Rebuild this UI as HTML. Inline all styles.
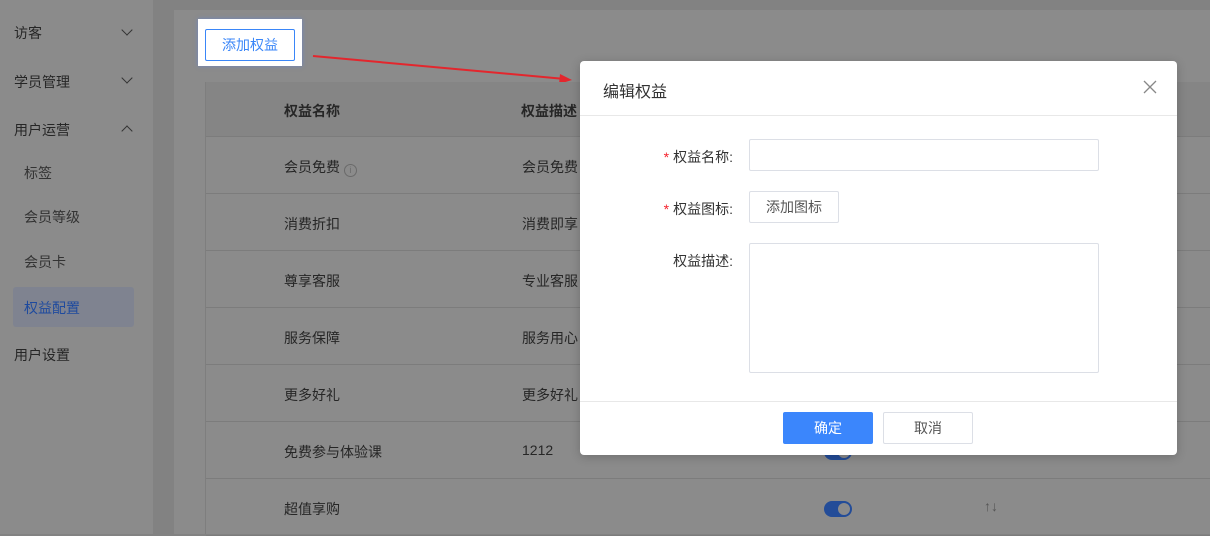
<!DOCTYPE html>
<html><head><meta charset="utf-8"><style>
*{box-sizing:border-box;margin:0;padding:0}
body{width:1210px;height:534px;overflow:hidden;background:#828282;font-family:"Liberation Sans","Noto Sans CJK SC",sans-serif;font-size:14px;color:#2a2a2a;position:relative}
.side{position:absolute;left:0;top:0;width:153px;height:534px;background:#8b8b8b}
.si{position:absolute;left:14px;font-size:14px;color:#262626}
.sub{left:24px;color:#333}
.chev{position:absolute;left:123px;width:8px;height:8px;border-right:1.3px solid #333;border-bottom:1.3px solid #333}
.panel{position:absolute;left:174px;top:10px;width:1036px;height:524px;background:#8b8b8b}
.tbl{position:absolute;left:205px;top:82px;width:1005px;height:452px;border-left:1px solid #7e7e7e}
.th{position:absolute;left:0;top:0;width:100%;height:55px;background:#858585;border-bottom:1px solid #7c7c7c}
.row{position:absolute;left:0;width:100%;height:57px;border-bottom:1px solid #7c7c7c}
.c{position:absolute;font-size:14px;color:#262626}
.sw{position:absolute;left:618px;top:21px;width:28px;height:16px;border-radius:8px;background:#234c98}
.sw div{position:absolute;right:2px;top:2px;width:12px;height:12px;border-radius:50%;background:#8b8b8b}
.dlg{position:absolute;left:580px;top:61px;width:597px;height:394px;background:#fff;border-radius:4px;box-shadow:0 2px 10px rgba(0,0,0,.2)}
.lbl{position:absolute;right:444px;font-size:14px;color:#333;text-align:right}
.req{color:#f5222d;margin-right:4px}
.inp{position:absolute;border:1px solid #dcdfe6;border-radius:2px;background:#fff}
</style></head><body>
<div class="side">
<div class="si" style="top:23px">访客</div><div class="chev" style="top:26px;transform:rotate(45deg)"></div>
<div class="si" style="top:72px">学员管理</div><div class="chev" style="top:74px;transform:rotate(45deg)"></div>
<div class="si" style="top:120px">用户运营</div><div class="chev" style="top:127px;transform:rotate(-135deg)"></div>
<div class="si sub" style="top:163px">标签</div>
<div class="si sub" style="top:207px">会员等级</div>
<div class="si sub" style="top:252px">会员卡</div>
<div style="position:absolute;left:13px;top:287px;width:121px;height:40px;background:#7f8390;border-radius:3px"></div>
<div class="si sub" style="top:298px;color:#1e4a9e">权益配置</div>
<div class="si" style="top:345px">用户设置</div>
</div>
<div class="panel"></div>
<div style="position:absolute;left:198px;top:19px;width:104px;height:47px;background:#fff;box-shadow:0 0 4px rgba(80,130,255,.5)"></div>
<div style="position:absolute;left:205px;top:29px;width:90px;height:32px;border:1px solid #3a86f8;border-radius:2px;color:#3a86f8;text-align:center;line-height:30px;font-size:14px">添加权益</div>
<svg style="position:absolute;left:0;top:0" width="1210" height="534"><line x1="313" y1="56" x2="565" y2="79" stroke="#e3262d" stroke-width="2"/><polygon points="572,80 560,74 559,84" fill="#e3262d"/></svg>
<div class="tbl">
<div class="th"><div class="c" style="left:78px;top:19px;font-weight:bold">权益名称</div><div class="c" style="left:315px;top:19px;font-weight:bold">权益描述</div></div>
<div class="row" style="top:55px"><div class="c" style="left:78px;top:20px">会员免费 <span style="display:inline-block;width:13px;height:13px;border:1px solid #6a6a6a;border-radius:50%;font-size:9px;line-height:11px;text-align:center;color:#6a6a6a;vertical-align:-1px">i</span></div><div class="c" style="left:316px;top:20px">会员免费</div></div>
<div class="row" style="top:112px"><div class="c" style="left:78px;top:20px">消费折扣</div><div class="c" style="left:316px;top:20px">消费即享</div></div>
<div class="row" style="top:169px"><div class="c" style="left:78px;top:20px">尊享客服</div><div class="c" style="left:316px;top:20px">专业客服</div></div>
<div class="row" style="top:226px"><div class="c" style="left:78px;top:20px">服务保障</div><div class="c" style="left:316px;top:20px">服务用心</div></div>
<div class="row" style="top:283px"><div class="c" style="left:78px;top:20px">更多好礼</div><div class="c" style="left:316px;top:20px">更多好礼</div></div>
<div class="row" style="top:340px"><div class="c" style="left:78px;top:20px">免费参与体验课</div><div class="c" style="left:316px;top:20px">1212</div><div class="sw" style="top:22px"><div></div></div></div>
<div class="row" style="top:397px"><div class="c" style="left:78px;top:20px">超值享购</div>
<div class="sw" style="top:22px"><div></div></div>
<div class="c" style="left:778px;top:19px;color:#555;font-size:14px">↑↓</div></div>
</div>
<div class="dlg">
<div style="position:absolute;left:23px;top:17px;font-size:16px;color:#333">编辑权益</div>
<svg style="position:absolute;left:563px;top:19px" width="14" height="14"><path d="M1 1L13 13M13 1L1 13" stroke="#888" stroke-width="1.3"/></svg>
<div style="position:absolute;left:0;top:54px;width:100%;height:1px;background:#e8e8e8"></div>
<div class="lbl" style="top:86px;right:444px"><span class="req">*</span>权益名称:</div>
<div class="inp" style="left:169px;top:78px;width:350px;height:32px"></div>
<div class="lbl" style="top:138px"><span class="req">*</span>权益图标:</div>
<div class="inp" style="left:169px;top:130px;width:90px;height:32px;text-align:center;line-height:30px;color:#555">添加图标</div>
<div class="lbl" style="top:190px">权益描述:</div>
<div class="inp" style="left:169px;top:182px;width:350px;height:130px"></div>
<div style="position:absolute;left:0;top:340px;width:100%;height:1px;background:#e8e8e8"></div>
<div style="position:absolute;left:203px;top:351px;width:90px;height:32px;background:#3b86fc;border-radius:2px;color:#fff;text-align:center;line-height:32px">确定</div>
<div style="position:absolute;left:303px;top:351px;width:90px;height:32px;border:1px solid #dcdfe6;border-radius:2px;color:#555;text-align:center;line-height:30px">取消</div>
</div>
</body></html>
